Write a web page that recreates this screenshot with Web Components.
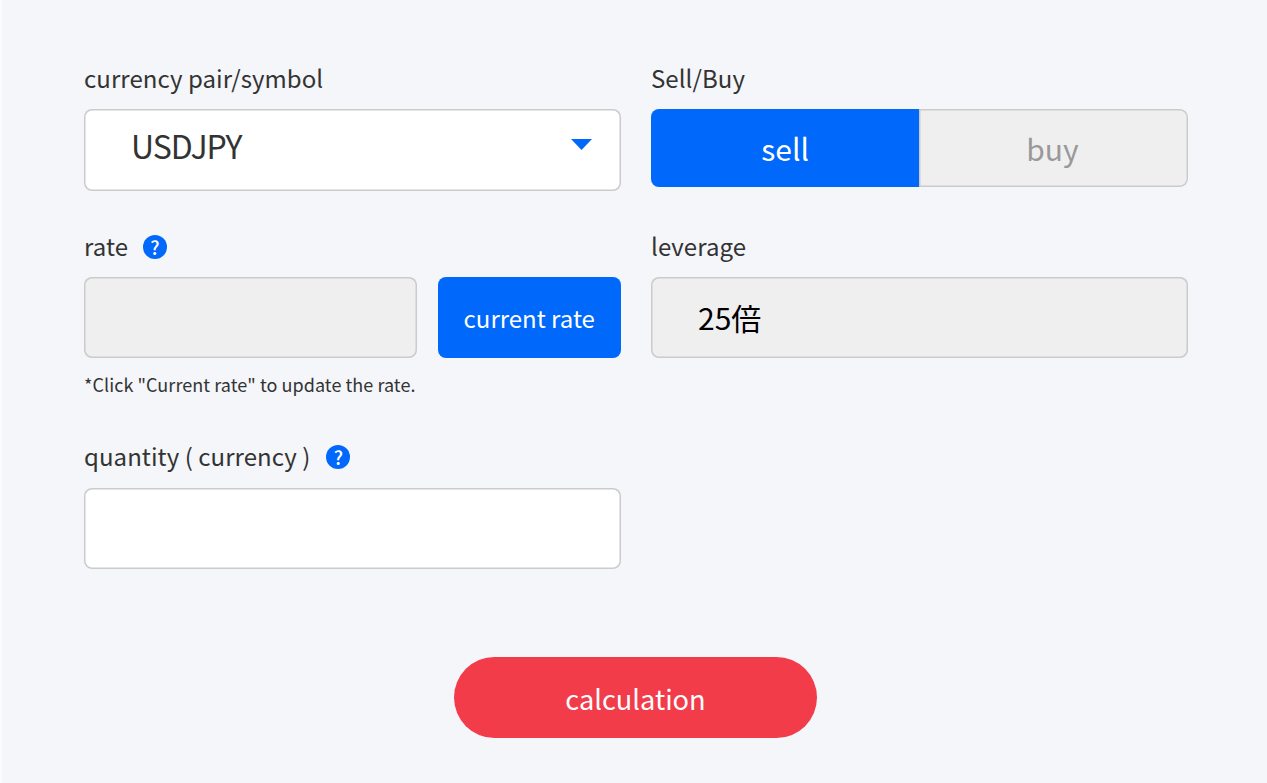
<!DOCTYPE html>
<html lang="en"><head><meta charset="utf-8"><style>
html,body{margin:0;height:100%;background:#fafbfd}
body{font-family:"Noto Sans CJK JP","Noto Sans",sans-serif;color:#333;overflow:hidden}
</style></head><body>
<calc-form>
  <calc-field slot="left" style="--gap:41.5px">
    <span slot="label">currency pair/symbol</span>
    <calc-select value="USDJPY"></calc-select>
  </calc-field>
  <calc-field slot="left" style="--gap:15px">
    <span slot="label">rate</span><calc-help slot="help"></calc-help>
    <calc-rate></calc-rate>
    <calc-note>*Click "Current rate" to update the rate.</calc-note>
  </calc-field>
  <calc-field slot="left" style="--label-gap:16px">
    <span slot="label">quantity ( currency )</span><calc-help slot="help" style="--help-gap:16px"></calc-help>
    <calc-input></calc-input>
  </calc-field>
  <calc-field slot="right" style="--gap:45px">
    <span slot="label">Sell/Buy</span>
    <calc-toggle></calc-toggle>
  </calc-field>
  <calc-field slot="right">
    <span slot="label">leverage</span>
    <calc-input disabled value="25倍"></calc-input>
  </calc-field>
  <calc-button slot="action">calculation</calc-button>
</calc-form>
<script>
function def(name, html){
  customElements.define(name, class extends HTMLElement{
    connectedCallback(){
      if(this.shadowRoot) return;
      const r=this.attachShadow({mode:'open'});
      r.innerHTML=typeof html==='function'?html(this):html;
    }
  });
}
const edge='inset 0 0 0 1.5px #cbcbcb';
def('calc-form',`<style>
:host{display:block;box-sizing:border-box;height:783px;margin-left:2px;background:#f4f6fa;padding:64px 80px 0 82px}
.cols{display:grid;grid-template-columns:536.5px 536.5px;column-gap:30.5px;height:505px}
.col{display:flex;flex-direction:column}
.action{display:flex;justify-content:center;margin-top:88px}
</style><div class="cols"><div class="col"><slot name="left"></slot></div><div class="col"><slot name="right"></slot></div></div>
<div class="action"><slot name="action"></slot></div>`);
def('calc-field',`<style>
:host{display:block;margin-bottom:var(--gap,0)}
.label{display:flex;align-items:center;height:30px;margin-bottom:var(--label-gap,15px);font-size:24px;line-height:30px;color:#333;letter-spacing:.06px}
::slotted(span){margin-top:-3px}
</style><div class="label"><slot name="label"></slot><slot name="help"></slot></div><slot></slot>`);
def('calc-help',`<style>
:host{display:flex;align-items:center;justify-content:center;width:24px;height:24px;margin-left:var(--help-gap,15px);border-radius:50%;background:#0068fb;color:#fff;font-size:19px;font-weight:500;line-height:24px;letter-spacing:0}
</style>?`);
def('calc-select',el=>`<style>
:host{display:flex;align-items:center;justify-content:space-between;box-sizing:border-box;height:81.5px;background:#fff;box-shadow:${edge};border-radius:8px;padding:0 29px 10px 47px;font-size:32px;letter-spacing:-1px;color:#333}
svg{display:block}
</style><span>${el.getAttribute('value')}</span><svg width="21" height="11" viewBox="0 0 21 11"><path d="M0 0H21L10.5 11Z" fill="#0068fb"/></svg>`);
def('calc-input',el=>`<style>
:host{display:flex;align-items:center;box-sizing:border-box;height:81px;background:${el.hasAttribute('disabled')?'#efefef':'#fff'};box-shadow:${edge};border-radius:8px;padding:0 0 2px 47px;font-size:30px;color:#000}
</style><span>${el.getAttribute('value')||''}</span>`);
def('calc-rate',`<style>
:host{display:grid;grid-template-columns:332.5px 182.5px;column-gap:21.5px;height:81px}
.box{box-sizing:border-box;background:#efefef;box-shadow:${edge};border-radius:8px}
.btn{display:flex;align-items:center;justify-content:center;background:#0068fb;color:#fff;border-radius:8px;font-size:24px}
</style><div class="box"></div><div class="btn">current rate</div>`);
def('calc-note',`<style>
:host{display:block;font-size:18px;letter-spacing:.05px;line-height:26px;margin-top:13px;margin-bottom:30px;color:#333}
</style><slot></slot>`);
def('calc-toggle',`<style>
:host{display:grid;grid-template-columns:1fr 1fr;height:78px;border-radius:8px;overflow:hidden;font-size:30px}
div{display:flex;align-items:center;justify-content:center;box-sizing:border-box}
.on{background:#0068fb;color:#fff}
.off{background:#efefef;color:#999;box-shadow:${edge};border-radius:0 8px 8px 0;padding-right:2px}
</style><div class="on">sell</div><div class="off">buy</div>`);
def('calc-button',`<style>
:host{display:flex;align-items:center;justify-content:center;width:363px;height:81px;border-radius:41px;background:#f23c4a;color:#fff;font-size:27.2px}
</style><slot></slot>`);
</script>
</body></html>
